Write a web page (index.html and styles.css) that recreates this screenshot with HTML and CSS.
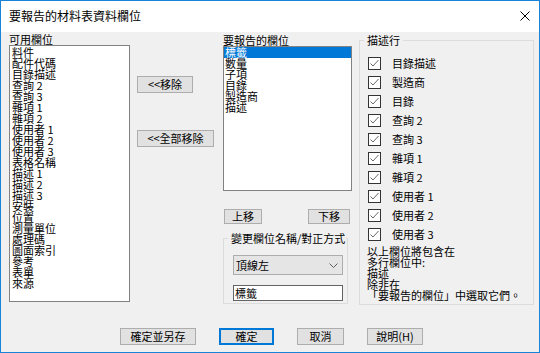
FILE: index.html
```html
<!DOCTYPE html>
<html lang="zh-Hant">
<head>
  <meta charset="UTF-8" />
  <title>要報告的材料表資料欄位</title>
  <link rel="stylesheet" href="styles.css">
</head>
<body>
  <div class="window">
    <div class="titlebar">
      <span class="title">要報告的材料表資料欄位</span>
      <svg class="close-icon" width="10" height="10" viewBox="0 0 10 10"><path d="M0.5 0.5L9.5 9.5M9.5 0.5L0.5 9.5" stroke="#000" stroke-width="1"/></svg>
    </div>

    <div class="dialog-body">
      <div class="main">
        <div class="col-available">
          <div class="field-label">可用欄位</div>
          <ul class="listbox listbox-available">
            <li>料件</li>
            <li>配件代碼</li>
            <li>目錄描述</li>
            <li>查詢 2</li>
            <li>查詢 3</li>
            <li>雜項 1</li>
            <li>雜項 2</li>
            <li>使用者 1</li>
            <li>使用者 2</li>
            <li>使用者 3</li>
            <li>表格名稱</li>
            <li>描述 1</li>
            <li>描述 2</li>
            <li>描述 3</li>
            <li>安裝</li>
            <li>位置</li>
            <li>測量單位</li>
            <li>處理碼</li>
            <li>圖面索引</li>
            <li>參考</li>
            <li>表單</li>
            <li>來源</li>
          </ul>
        </div>

        <div class="col-move">
          <button class="btn btn-remove">&lt;&lt;移除</button>
          <button class="btn btn-remove-all">&lt;&lt;全部移除</button>
        </div>

        <div class="col-report">
          <div class="field-label label-report">要報告的欄位</div>
          <ul class="listbox listbox-report">
            <li class="selected">標籤</li>
            <li>數量</li>
            <li>子項</li>
            <li>目錄</li>
            <li>製造商</li>
            <li>描述</li>
          </ul>
          <div class="order-buttons">
            <button class="btn btn-up">上移</button>
            <button class="btn btn-down">下移</button>
          </div>
          <fieldset class="group group-rename">
            <legend>變更欄位名稱/對正方式</legend>
            <div class="dropdown">
              <span>頂線左</span>
              <svg width="9" height="5" viewBox="0 0 9 5"><path d="M0.5 0.5L4.5 4.5L8.5 0.5" fill="none" stroke="#606060" stroke-width="1"/></svg>
            </div>
            <input class="text-input" type="text" value="標籤">
          </fieldset>
        </div>

        <fieldset class="group group-desc">
          <legend>描述行</legend>
          <div class="check-row"><span class="checkbox"><svg width="11" height="11" viewBox="0 0 11 11"><path d="M1.5 5.5L4 8L9.5 2" fill="none" stroke="#6a6a6a" stroke-width="1"/></svg></span>目錄描述</div>
          <div class="check-row"><span class="checkbox"><svg width="11" height="11" viewBox="0 0 11 11"><path d="M1.5 5.5L4 8L9.5 2" fill="none" stroke="#6a6a6a" stroke-width="1"/></svg></span>製造商</div>
          <div class="check-row"><span class="checkbox"><svg width="11" height="11" viewBox="0 0 11 11"><path d="M1.5 5.5L4 8L9.5 2" fill="none" stroke="#6a6a6a" stroke-width="1"/></svg></span>目錄</div>
          <div class="check-row"><span class="checkbox"><svg width="11" height="11" viewBox="0 0 11 11"><path d="M1.5 5.5L4 8L9.5 2" fill="none" stroke="#6a6a6a" stroke-width="1"/></svg></span>查詢 2</div>
          <div class="check-row"><span class="checkbox"><svg width="11" height="11" viewBox="0 0 11 11"><path d="M1.5 5.5L4 8L9.5 2" fill="none" stroke="#6a6a6a" stroke-width="1"/></svg></span>查詢 3</div>
          <div class="check-row"><span class="checkbox"><svg width="11" height="11" viewBox="0 0 11 11"><path d="M1.5 5.5L4 8L9.5 2" fill="none" stroke="#6a6a6a" stroke-width="1"/></svg></span>雜項 1</div>
          <div class="check-row"><span class="checkbox"><svg width="11" height="11" viewBox="0 0 11 11"><path d="M1.5 5.5L4 8L9.5 2" fill="none" stroke="#6a6a6a" stroke-width="1"/></svg></span>雜項 2</div>
          <div class="check-row"><span class="checkbox"><svg width="11" height="11" viewBox="0 0 11 11"><path d="M1.5 5.5L4 8L9.5 2" fill="none" stroke="#6a6a6a" stroke-width="1"/></svg></span>使用者 1</div>
          <div class="check-row"><span class="checkbox"><svg width="11" height="11" viewBox="0 0 11 11"><path d="M1.5 5.5L4 8L9.5 2" fill="none" stroke="#6a6a6a" stroke-width="1"/></svg></span>使用者 2</div>
          <div class="check-row"><span class="checkbox"><svg width="11" height="11" viewBox="0 0 11 11"><path d="M1.5 5.5L4 8L9.5 2" fill="none" stroke="#6a6a6a" stroke-width="1"/></svg></span>使用者 3</div>
          <p class="note">以上欄位將包含在<br>多行欄位中:<br>描述<br>除非在<br>「要報告的欄位」中選取它們。</p>
        </fieldset>
      </div>

      <div class="footer">
        <button class="btn btn-save">確定並另存</button>
        <button class="btn btn-ok">確定</button>
        <button class="btn btn-cancel">取消</button>
        <button class="btn btn-help">說明(H)</button>
      </div>
    </div>
  </div>
</body>
</html>
```

FILE: styles.css
```css
body {
  margin: 0;
  font-family: "Noto Sans CJK TC", "Noto Sans", sans-serif;
  color: #000;
}

.window {
  width: 540px;
  height: 353px;
  box-sizing: border-box;
  border: 1px solid #1883d7;
  display: flex;
  flex-direction: column;
  font-size: 11px;
  line-height: 11px;
}

.titlebar {
  height: 30px;
  flex: 0 0 auto;
  background-color: #fff;
  display: flex;
  align-items: center;
  justify-content: space-between;
  padding: 0 9px 1px 8px;
}

.title {
  font-size: 12px;
  line-height: 12px;
}

.dialog-body {
  flex: 1;
  display: flex;
  flex-direction: column;
  background-color: #f0f0f0;
}

.main {
  flex: 1;
  display: flex;
  align-items: flex-start;
  padding-left: 8px;
}

.field-label {
  margin-top: 2px;
  height: 11px;
}

.label-report {
  margin-top: 3px;
}

.listbox {
  margin: 0;
  padding: 0;
  list-style: none;
  background-color: #fff;
  border: 1px solid #828282;
  box-sizing: border-box;
}

.listbox li {
  height: 11px;
  white-space: nowrap;
}

.col-available {
  width: 121px;
  margin-right: 7px;
}

.listbox-available {
  height: 257px;
  padding: 1px 2px;
}

.col-move {
  width: 77px;
  margin-right: 9px;
  padding-top: 44px;
  display: flex;
  flex-direction: column;
  align-items: flex-start;
}

.btn {
  height: 17px;
  padding: 0;
  background-color: #e1e1e1;
  border: 1px solid #adadad;
  font-family: inherit;
  font-size: 11px;
  line-height: 11px;
  color: #000;
  box-sizing: border-box;
}

.btn-remove {
  width: 56px;
}

.btn-remove-all {
  width: 77px;
  margin-top: 37px;
}

.col-report {
  width: 129px;
  margin-right: 7px;
}

.listbox-report {
  height: 145px;
}

.listbox-report li {
  padding-left: 1px;
}

.listbox-report li.selected {
  background-color: #0078d7;
  color: #fff;
}

.order-buttons {
  display: flex;
  justify-content: space-between;
  margin-top: 18px;
  padding: 0 2px 0 1px;
}

.btn-up,
.btn-down {
  height: 15px;
}

.btn-up {
  width: 38px;
}

.btn-down {
  width: 42px;
}

.group {
  margin: 0;
  border: 1px solid #dcdcdc;
  box-sizing: border-box;
  min-width: 0;
}

.group legend {
  padding: 0 3px;
  line-height: 11px;
  white-space: nowrap;
}

.group-rename {
  width: 125px;
  margin-top: 9px;
  padding: 11px 0 2px 9px;
}

.group-rename legend {
  margin-left: -5px;
  padding: 0 1px 0 3px;
}

.dropdown {
  width: 110px;
  height: 20px;
  box-sizing: border-box;
  display: flex;
  align-items: center;
  justify-content: space-between;
  padding: 0 4px 0 2px;
  background-color: #e5e5e5;
  border: 1px solid #adadad;
}

.text-input {
  display: block;
  width: 110px;
  height: 16px;
  margin-top: 10px;
  padding: 0 1px;
  box-sizing: border-box;
  border: 1px solid #646464;
  background-color: #fff;
  font-family: inherit;
  font-size: 11px;
  outline: none;
}

.group-desc {
  width: 175px;
  margin-top: 3px;
  padding: 8px 0 3px 8px;
}

.group-desc legend {
  margin-left: -4px;
}

.check-row {
  display: flex;
  align-items: center;
  gap: 11px;
  height: 19px;
}

.checkbox {
  width: 13px;
  height: 13px;
  box-sizing: border-box;
  border: 1px solid #333;
  background-color: #fff;
  display: flex;
}

.note {
  margin: 2px 0 0 -1px;
  line-height: 11px;
}

.footer {
  display: flex;
  justify-content: center;
  gap: 23px;
  padding: 0 0 7px 3px;
}

.btn-save {
  width: 76px;
}

.btn-ok {
  width: 55px;
  border: 2px solid #0078d7;
}

.btn-cancel {
  width: 47px;
}

.btn-help {
  width: 56px;
}
```
